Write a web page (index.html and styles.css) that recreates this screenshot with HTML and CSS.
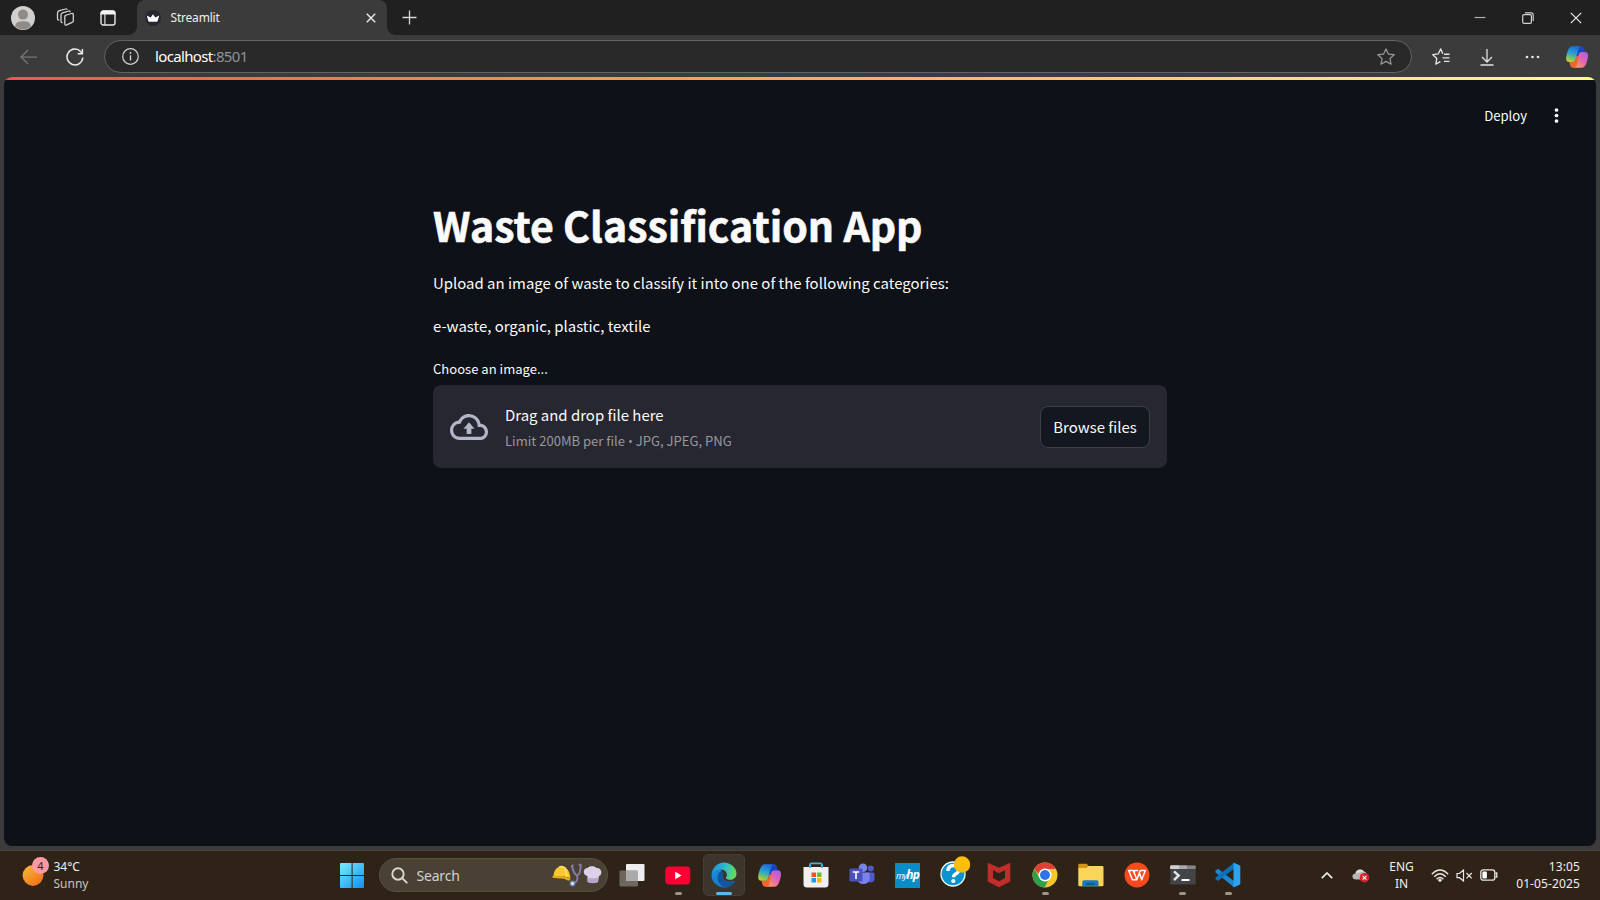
FILE: index.html
```html
<!DOCTYPE html>
<html lang="en">
<head>
<meta charset="utf-8">
<title>Streamlit</title>
<link rel="stylesheet" href="styles.css">
</head>
<body>
<svg class="defs" width="0" height="0" aria-hidden="true">
  <defs>
    <linearGradient id="cpBlue" x1=".3" y1="0" x2="0" y2="1"><stop offset="0" stop-color="#1d74dc"/><stop offset=".4" stop-color="#2ca5cc"/><stop offset=".7" stop-color="#7cc662"/><stop offset="1" stop-color="#f0c51e"/></linearGradient>
    <linearGradient id="cpPink" x1="1" y1="0" x2=".2" y2="1"><stop offset="0" stop-color="#a45cf0"/><stop offset=".45" stop-color="#df62b8"/><stop offset="1" stop-color="#ff9a5c"/></linearGradient>
    <symbol id="copilot" viewBox="0 0 24 24">
      <path d="M8 22.700h9c2.500 0 4-3.200 5-6.500 1.200-3.900 2.300-9.200-2.200-9.200h-3.400c-1.400 0-2.400.8-2.800 2.200l-2.800 10c-.5 1.800-1.200 3.500-2.800 3.500z" fill="url(#cpPink)"/>
      <path d="M14 1.300h1.800c1.700 0 2.700.6 3.200 2.200l1 3.500h-3.600c-1.400 0-2.400.8-2.800 2.200L12.300 13.500 9.500 13.500l2.500-9z" fill="#1747c5"/>
      <path d="M9.500 22.700H8c-1.500 0-2.300-.8-2.800-2.400L4.300 17h3.400c1.400 0 2.400-.8 2.800-2.200l1-3.800h2.700l-2.800 10c-.3 1-1 1.700-1.900 1.700z" fill="#f0662f"/>
      <path d="M15.300 1.300H7.200c-2.500 0-4 3.200-5 6.500C1 11.700-.2 17 4.300 17h3.400c1.400 0 2.400-.8 2.800-2.200l2.800-10c.4-1.600.8-3 2-3.500z" fill="url(#cpBlue)"/>
    </symbol>
  </defs>
</svg>
<div class="browser">
  <header class="titlebar">
    <div class="cell"><svg width="24" height="24" viewBox="0 0 24 24"><circle cx="12" cy="12" r="12" fill="#d2d0ce"/><circle cx="12" cy="8.600" r="5" fill="#918b87"/><path d="M4.200 20.500c0-4 3.400-5.200 7.800-5.200s7.800 1.200 7.800 5.200a12 12 0 0 1-15.600 0z" fill="#918b87"/></svg></div>
    <div class="cell"><svg width="19" height="19" viewBox="0 0 19 19" fill="none" stroke="#d6d6d6" stroke-width="1.250" stroke-linejoin="round" stroke-linecap="round"><path d="M9 7.500l6.500-2q1.800-.4 1.800 1.300v6q0 1.200-1.200 1.600l-5.400 2.500q-1.900.7-1.900-1.200V9q0-1.200 1.200-1.700z"/><path d="M14.200 3.600Q14 2.700 12.700 3L6.500 4.800Q5 5.300 5 6.800v6.500q0 1.400 1.200 1.400"/><path d="M11 1.300Q10.600.6 9.500 1L3.400 2.600Q1.500 3.200 1.500 5v5.700q0 1.300 1.300 1.500"/></svg></div>
    <div class="cell"><svg width="16" height="16" viewBox="0 0 16 16"><rect x="1" y="1" width="14" height="14" rx="2.200" fill="none" stroke="#e8e8e8" stroke-width="1.400"/><path d="M.6 3A2.500 2.500 0 0 1 3 .5h10A2.500 2.500 0 0 1 15.400 3v1.600H.6z" fill="#f4f4f4"/><path d="M4.900 4v11" stroke="#ddd" stroke-width="1.200"/></svg></div>
    <div class="tab">
      <svg width="16" height="16" viewBox="0 0 16 16"><circle cx="8" cy="8" r="8" fill="#262730"/><path d="M1.800 5.500L5.700 7.600 8 4.200l2.300 3.400 3.900-2.100L12.700 11a1 1 0 0 1-1 .7H4.300a1 1 0 0 1-1-.7z" fill="#fff"/></svg>
      <span class="tab-name">Streamlit</span>
      <svg class="tab-close" width="10" height="10" viewBox="0 0 10 10"><path d="M.8.800l8.400 8.400M9.200.800L.8 9.200" stroke="#e6e6e6" stroke-width="1.500"/></svg>
    </div>
    <svg class="plus" width="15" height="15" viewBox="0 0 15 15"><path d="M7.500.500v14M.5 7.500h14" stroke="#d8d8d8" stroke-width="1.300"/></svg>
    <div class="window-buttons">
      <span><svg width="12" height="12" viewBox="0 0 12 12"><path d="M.5 5.500h11" stroke="#aaa" stroke-width="1.200"/></svg></span>
      <span><svg width="12" height="12" viewBox="0 0 12 12" fill="none" stroke="#d0d0d0" stroke-width="1.200"><rect x=".7" y="2.600" width="8.700" height="8.700" rx="1.300"/><path d="M3 .8h6.200q2 0 2 2V9"/></svg></span>
      <span><svg width="12" height="12" viewBox="0 0 12 12"><path d="M.8.800l10.400 10.400M11.200.800L.8 11.200" stroke="#ececec" stroke-width="1.200"/></svg></span>
    </div>
  </header>
  <nav class="toolbar">
    <div class="nav-cell"><svg width="18" height="16" viewBox="0 0 18 16" fill="none" stroke="#777" stroke-width="1.250"><path d="M17 8H1M8 1L1 8l7 7"/></svg></div>
    <div class="nav-cell"><svg width="18" height="18" viewBox="0 0 18 18" fill="none" stroke="#ececec" stroke-width="1.500"><path d="M16.800 9.500A7.900 7.900 0 1 1 14.800 3.700L16.400 5.500"/><path d="M16.400 1v4.700h-4.700"/></svg></div>
    <div class="address">
      <svg width="17" height="17" viewBox="0 0 17 17"><circle cx="8.500" cy="8.500" r="7.800" fill="none" stroke="#d2d2d2" stroke-width="1.200"/><path d="M8.500 7.300v5.200" stroke="#ddd" stroke-width="1.300"/><circle cx="8.500" cy="4.900" r=".9" fill="#ddd"/></svg>
      <span class="url">localhost<i>:8501</i></span>
      <svg class="star" width="18" height="17" viewBox="0 0 18 17" fill="none" stroke="#9a9a9a" stroke-width="1.200" stroke-linejoin="round"><path d="M9 .9l2.400 5.200 5.800.6-4.300 3.900 1.200 5.600L9 13.400l-5.100 2.800 1.200-5.600L.8 6.700l5.800-.6z"/></svg>
    </div>
    <div class="tools">
      <span><svg width="18" height="17" viewBox="0 0 18 17" fill="none" stroke="#e4e4e4" stroke-width="1.350" stroke-linejoin="round"><path d="M10.800 5.800L8.800.9 6.300 5.800.8 6.700l4 3.900-1 5.500 4.500-2.400"/><path d="M12 6.200h5.500M10.500 9.800h7M12 13.300h5.500"/></svg></span>
      <span><svg width="14" height="18" viewBox="0 0 14 18" fill="none" stroke="#e2e2e2" stroke-width="1.300"><path d="M7 1v13M2 9l5 5 5-5M.5 17h13"/></svg></span>
      <span><svg width="15" height="4" viewBox="0 0 15 4" fill="#e6e6e6"><circle cx="2" cy="2" r="1.350"/><circle cx="7.500" cy="2" r="1.350"/><circle cx="13" cy="2" r="1.350"/></svg></span>
      <span><svg width="24" height="24"><use href="#copilot"/></svg></span>
    </div>
  </nav>
  <main class="page">
    <div class="rainbow"></div>
    <div class="app-header"><span class="deploy">Deploy</span><svg width="5" height="15" viewBox="0 0 5 15" fill="#fafafa"><circle cx="2.500" cy="2" r="1.850"/><circle cx="2.500" cy="7.500" r="1.850"/><circle cx="2.500" cy="13" r="1.850"/></svg></div>
    <section class="content">
      <h1>Waste Classification App</h1>
      <p class="intro">Upload an image of waste to classify it into one of the following categories:</p>
      <p class="cats">e-waste, organic, plastic, textile</p>
      <label class="label">Choose an image...</label>
      <div class="dropzone">
        <svg width="38" height="26" viewBox="0 4 24 16" preserveAspectRatio="none" fill="#b3b5cb"><path d="M19.350 10.040A7.490 7.490 0 0 0 12 4C9.110 4 6.600 5.640 5.350 8.040A5.994 5.994 0 0 0 0 14c0 3.310 2.690 6 6 6h13c2.760 0 5-2.240 5-5 0-2.640-2.050-4.780-4.650-4.960zM19 18H6c-2.210 0-4-1.790-4-4s1.790-4 4-4h.71C7.370 7.690 9.480 6 12 6c3.040 0 5.500 2.460 5.500 5.500v.5H19c1.660 0 3 1.340 3 3s-1.340 3-3 3zM8.500 13h2v3.300h3V13h2L12 9z"/></svg>
        <div class="drop-text"><span class="drop-title">Drag and drop file here</span><span class="drop-limit">Limit 200MB per file <i>•</i> JPG, JPEG, PNG</span></div>
        <button class="browse">Browse files</button>
      </div>
    </section>
  </main>
</div>
<footer class="taskbar">
  <div class="weather">
    <div class="sun"><svg width="28" height="28" viewBox="0 0 28 28"><defs><linearGradient id="sun" x1="0" y1="0" x2=".8" y2="1"><stop offset="0" stop-color="#f6bd3a"/><stop offset="1" stop-color="#f26e18"/></linearGradient></defs><circle cx="11" cy="17.500" r="10.400" fill="url(#sun)"/></svg><b>4</b></div>
    <div class="weather-text"><span>34°C</span><span class="dim">Sunny</span></div>
  </div>
  <svg class="start" width="24" height="25" viewBox="0 0 24 25"><defs><linearGradient id="win" gradientUnits="userSpaceOnUse" x1="0" y1="0" x2="24" y2="25"><stop offset="0" stop-color="#79edfb"/><stop offset="1" stop-color="#0c90f3"/></linearGradient></defs><path d="M0 1q0-1 1-1h10.600v12H0zM12.600 0H23q1 0 1 1v11H12.600zM0 13h11.600v12H1q-1 0-1-1zM12.600 13H24v11q0 1-1 1H12.600z" fill="url(#win)"/></svg>
  <div class="search">
    <svg width="17" height="17" viewBox="0 0 17 17" fill="none" stroke="#d8d5d2" stroke-width="1.900" stroke-linecap="round"><circle cx="7" cy="7" r="5.700"/><path d="M11.200 11.200l4.500 4.500"/></svg>
    <span>Search</span>
    <svg class="jobs" width="51" height="24" viewBox="0 0 51 24">
      <path d="M1.500 14C1.500 7.500 5 3.500 9.500 3.500S17.500 7 18.500 15l-6.500-1.500z" fill="#f7c92a"/><path d="M7 4.200Q10.500 2.500 13 5l2 8.500" fill="none" stroke="#ffe476" stroke-width="1.500"/><path d="M.3 13.700q0-.8 1.200-.9l10 .5 6.500 2q1 1.500-.5 2.300-1.500.3-5.500-1.800L1.300 15q-1-.3-1-1.300z" fill="#e3a81d"/>
      <path d="M21.500 2l-1.500 1q1.500 7.500 5 9.500 3.500-1 3.700-10.500l-2-.5M25 12.500q1.800 6-3.500 7.500" fill="none" stroke="#8b7da8" stroke-width="1.900"/><circle cx="20.500" cy="20.500" r="2.300" fill="#cfe6fa" stroke="#667fa8" stroke-width="1.200"/>
      <path d="M35.500 13c-5-.5-5-8 0-8C37 2.500 43 2.500 44.500 5c6-.5 6 7.500 2.500 8l-1 6q-5 2-10.500 0z" fill="#ddd0ea"/><path d="M35.300 14.500l.7 4.800q5 2 9.500 0l.7-4.800q-5 1.700-10.900 0z" fill="#b7a5cc"/>
    </svg>
  </div>
  <div class="apps">
    <span class="app"><svg width="26" height="24" viewBox="0 0 26 24"><rect x="7" y="1" width="18.500" height="17" rx="1" fill="#efefef"/><rect x=".5" y="7.500" width="18.500" height="16" rx="1" fill="#77736f" opacity=".85"/><path d="M7 8h12v10H7z" fill="#aaa"/></svg></span>
    <span class="app run"><svg width="26" height="19" viewBox="0 0 26 19"><rect x=".3" y=".5" width="25" height="18" rx="4" fill="#fc0034"/><path d="M10.200 5.800v7.400l6.500-3.700z" fill="#fff"/></svg></span>
    <span class="app active run"><svg width="26" height="26" viewBox="0 0 26 26"><defs><linearGradient id="eg" x1="0" y1=".3" x2="1" y2=".5"><stop offset="0" stop-color="#1d8fdc"/><stop offset=".5" stop-color="#2cbbd0"/><stop offset="1" stop-color="#67dd55"/></linearGradient><linearGradient id="eb" x1="0" y1="0" x2=".6" y2="1"><stop offset="0" stop-color="#1b8fd6"/><stop offset="1" stop-color="#1476cc"/></linearGradient></defs><path d="M.5 13A12.500 12.500 0 0 0 13 25.500c4.500 0 8.300-2.300 10.500-5.600.4-.7-.2-1.200-.9-.9-3.500 1.600-8.600.8-10.300-2.200L10 7.500C5 6 1 9 .5 13z" fill="url(#eb)"/><path d="M.5 13C1 5.500 6.500.500 13 .500S25.500 5.500 25.500 11.500c0 4-3 6.300-6.500 6.300-3 0-4.700-1.200-4-2.300 2.500-3.500-.5-8-5-8C5 7.500 1 10 .5 13z" fill="url(#eg)"/><path d="M9.800 9.500C6.500 11.500 5.700 15.500 7.200 19c1.300 3.200 4 6 7.300 6.400 4-.3 7-2.500 9-5.500.4-.7-.2-1.200-.9-.9-3.800 1.700-8.200.8-10-1.800-1.400-2-1.400-3.700.2-5.400-.7-1.400-1.800-2-3-2.300z" fill="#1353a0"/></svg></span>
    <span class="app"><svg width="25" height="25"><use href="#copilot"/></svg></span>
    <span class="app"><svg width="26" height="26" viewBox="0 0 26 26"><path d="M7 7V3q0-1.700 1.700-1.700h8.600Q19 1.300 19 3v4" fill="none" stroke="#3eb0e4" stroke-width="1.700"/><path d="M.5 5h25v17q0 3.500-3.500 3.500H4Q.5 25.500.5 22z" fill="#f0f0f0"/><path d="M7 2.500V6M19 2.500V6" stroke="#3eb0e4" stroke-width="1.700"/><path d="M8.500 10.500H13V15H8.500z" fill="#ed512b"/><path d="M14 10.500h4.500V15H14z" fill="#78b82b"/><path d="M8.500 16H13v4.500H8.500z" fill="#1d9adf"/><path d="M14 16h4.500v4.500H14z" fill="#f7b51c"/></svg></span>
    <span class="app"><svg width="26" height="24" viewBox="0 0 26 24"><circle cx="21.800" cy="5.500" r="3" fill="#5059c9"/><path d="M17 9.500h7q1.500 0 1.500 1.500v4.500q0 4-4 4-3 0-4.500-2z" fill="#5059c9"/><circle cx="14" cy="4.800" r="4.300" fill="#7b83eb"/><path d="M8 9.500h11.500q1.200 0 1.200 1.300V16a6.500 6.500 0 0 1-12.700 0z" fill="#7b83eb"/><rect x=".4" y="5.500" width="13" height="13" rx="1.300" fill="#4951bb"/><path d="M3.700 9h6.500M7 9v7" stroke="#fff" stroke-width="1.600"/></svg></span>
    <span class="app"><span class="hp">my<b>hp</b></span></span>
    <span class="app help"><svg width="34" height="32" viewBox="0 0 34 32"><circle cx="17" cy="19" r="12" fill="#0a93cf" stroke="#f4fafc" stroke-width="1.300"/><path d="M12 16q0-5.500 5.500-5.500 5.200 0 5.200 4.200 0 2.500-2.700 4-2.500 1.300-2.500 3.600" fill="none" stroke="#fff" stroke-width="3.400"/><circle cx="17.300" cy="26" r="2.100" fill="#fff"/><circle cx="26" cy="9.500" r="8.200" fill="#fdbd0b"/></svg></span>
    <span class="app"><svg width="24" height="26" viewBox="0 0 24 26"><path d="M.7.700L12 5.700 23.300.700v18.800L12 25.300.700 19.500zM6 8.300V16l6 3.200 6-3.200V8.300l-6 3z" fill="#c12c2d" fill-rule="evenodd"/></svg></span>
    <span class="app run"><svg width="26" height="26" viewBox="0 0 26 26"><circle cx="13" cy="13" r="12.500" fill="#f6c72b"/><path d="M2.200 6.700A12.500 12.500 0 0 1 23.900 7H13a6 6 0 0 0-5.500 6z" fill="#df4036"/><path d="M2.200 6.700l5.700 9.500A6 6 0 0 0 16.300 18.200L12.500 25.500A12.500 12.500 0 0 1 2.200 6.700z" fill="#2f9f4b"/><circle cx="13" cy="13" r="6.500" fill="#fff"/><circle cx="13" cy="13" r="5" fill="#2f74e6"/></svg></span>
    <span class="app"><svg width="26" height="24" viewBox="0 0 26 24"><path d="M.3 2Q.3.700 1.600.700h7L11 3.300H9L7 6H.3z" fill="#d99511"/><path d="M.3 5h7.200L10 3h14.200q1.300 0 1.300 1.300V22q0 1.300-1.300 1.300H1.600Q.3 23.300.3 22z" fill="#fbd558"/><path d="M4.300 23.300V19q0-1.800 1.800-1.800h12.600q1.800 0 1.800 1.800v4.300z" fill="#1777bf"/><path d="M8.200 21h8.400" stroke="#07508d" stroke-width="1.400"/></svg></span>
    <span class="app"><svg width="26" height="26" viewBox="0 0 26 26"><circle cx="13" cy="13" r="12.500" fill="#fa491f"/><path d="M4.700 8.500h4.800l3.300 9.300h-4.400zM9.500 11.500l1.400-3h3.300M12.800 17.800l3.400-9.300M15.400 10.900l2.300 6.900 3.700-9.300h-5.200" fill="none" stroke="#fff" stroke-width="1.500" stroke-linejoin="round"/></svg></span>
    <span class="app run"><svg width="26" height="20" viewBox="0 0 26 20"><rect x=".3" y=".5" width="25.400" height="19" rx="1.200" fill="#434448"/><path d="M.3 4V1.500Q.3.500 1.300.500h23.400q1 0 1 1V4z" fill="#858585"/><path d="M.3 4V1.500q0-1 1-1H17V4z" fill="#aaa"/><path d="M.3 4V1.500q0-1 1-1H9V4z" fill="#d0d0d0"/><path d="M4 6.300l4.700 4.300L4 15" fill="none" stroke="#e6e6e6" stroke-width="2.400"/><path d="M11.500 15h8" stroke="#fff" stroke-width="2"/></svg></span>
    <span class="app run"><svg width="26" height="26" viewBox="0 0 26 26"><path d="M.5 8.800l2.500-1.900L19 19.300v5.900z" fill="#1a87cf"/><path d="M.5 8.800L3 6.900 19 19.300v5.600L.5 10.500z" fill="#1a87cf"/><path d="M.5 17.200L3 19.100 19 6.700V.800L.5 15.500z" fill="#0a70b8"/><path d="M18.500.500l6 2.700q.8.400.8 1.300v17q0 .9-.8 1.300l-6 2.700z" fill="#2ba3f0"/></svg></span>
  </div>
  <div class="tray">
    <svg class="chev" width="12" height="7" viewBox="0 0 12 7" fill="none" stroke="#eceae8" stroke-width="1.700"><path d="M.8 6.200L6 1l5.200 5.200"/></svg>
    <svg class="cloud" width="18" height="15" viewBox="0 0 18 15"><path d="M4.500 11.500C-1 11.500-.5 5.500 3.500 5.500 4 1 10 0 12 3.500c3 .5 3 3 3 8z" fill="#b9b7b4"/><path d="M3.500 5.500C4 1 10 0 12 3.500z" fill="#dedcda"/><circle cx="12.500" cy="9.700" r="4.800" fill="#d2232f"/><path d="M10.600 7.800l3.800 3.800M14.400 7.800l-3.800 3.800" stroke="#fff" stroke-width="1.100"/></svg>
    <div class="lang"><span>ENG</span><span>IN</span></div>
    <svg class="wifi" width="18" height="13" viewBox="0 0 18 13" fill="none" stroke="#eceae8" stroke-width="1.400"><path d="M.8 5.300Q9-3.200 17.200 5.300M3.200 7.800q5.800-6 11.600 0M5.600 10.200q3.400-3.600 6.800 0"/><circle cx="9" cy="11.200" r="1.600" fill="#eceae8" stroke="none"/></svg>
    <svg class="vol" width="17" height="13" viewBox="0 0 17 13" fill="none" stroke="#e8e6e4" stroke-width="1.200"><path d="M1 4.500h2.500L7.500 1v11L3.500 8.700H1zM10.500 4l5.300 5.300M15.800 4l-5.300 5.300"/></svg>
    <svg class="bat" width="18" height="12" viewBox="0 0 18 12"><rect x=".8" y=".8" width="14" height="10.400" rx="2.500" fill="none" stroke="#e8e6e4" stroke-width="1.300"/><rect x="2.400" y="2.400" width="4.500" height="7.200" rx="1" fill="#fff"/><path d="M15.500 4h1.300v4h-1.300" fill="none" stroke="#e8e6e4" stroke-width="1.300"/></svg>
    <div class="clock"><span>13:05</span><span>01-05-2025</span></div>
  </div>
</footer>
</body>
</html>
```
FILE: styles.css
```css
* { box-sizing: border-box; }
body {
  margin: 0;
  width: 1600px;
  height: 900px;
  overflow: hidden;
  background: #3b3b3b;
  font-family: "Noto Sans", "Open Sans", sans-serif;
  color: #f0f0f0;
  display: flex;
  flex-direction: column;
}
.defs { position: absolute; }
svg { display: block; flex: none; }
i { font-style: normal; }
span, p, h1, label, button { white-space: nowrap; }
.browser { height: 851px; display: flex; flex-direction: column; border-bottom: 1px solid #484540; }

.titlebar { height: 35px; background: #202020; display: flex; align-items: center; padding-left: 2px; flex: none; }
.cell { width: 42.500px; display: flex; justify-content: center; }
.tab {
  position: relative;
  width: 250px;
  height: 35px;
  margin-left: 7.500px;
  padding: 0 11.500px 0 7.500px;
  display: flex;
  align-items: center;
  background: #3b3b3b;
  border-radius: 8px 8px 0 0;
}
.tab::before, .tab::after { content: ""; position: absolute; bottom: 0; width: 8px; height: 8px; }
.tab::before { left: -8px; background: radial-gradient(circle at 0 0, #202020 7.500px, #3b3b3b 8px); }
.tab::after { right: -8px; background: radial-gradient(circle at 100% 0, #202020 7.500px, #3b3b3b 8px); }
.tab-name { margin-left: 10px; font-size: 12px; letter-spacing: -.2px; color: #eee; }
.tab-close { margin-left: auto; }
.plus { margin-left: 14.500px; }
.window-buttons { margin-left: auto; display: flex; }
.window-buttons span { width: 48px; display: flex; justify-content: center; }

.toolbar { height: 42px; display: flex; align-items: center; padding: 1px 0 0 6px; flex: none; }
.nav-cell { width: 46px; display: flex; justify-content: center; }
.address {
  width: 1308px;
  height: 33px;
  margin-left: 6px;
  display: flex;
  align-items: center;
  padding: 0 16px 0 17px;
  background: #292929;
  border: 1px solid #646464;
  border-radius: 17px;
}
.url { margin: 0 0 2px 16px; font-size: 15px; letter-spacing: -.65px; color: #fff; }
.url i { color: #929292; }
.star { margin-left: auto; }
.tools { display: flex; margin-left: 7px; }
.tools span { width: 45.300px; display: flex; align-items: center; justify-content: center; }

.page {
  height: 769px;
  margin: 0 4px;
  background: #0e1117;
  border-radius: 8px;
  overflow: hidden;
  font-family: "Noto Sans CJK SC", sans-serif;
  color: #fafafa;
}
.rainbow { height: 3px; background: linear-gradient(90deg, #f85052, #fffd80); }
.app-header { height: 70px; display: flex; align-items: center; justify-content: flex-end; gap: 26.500px; padding-right: 37.500px; }
.deploy { font-size: 13.100px; }
.content { width: 734px; margin: 44px 0 0 429px; display: flex; flex-direction: column; align-items: flex-start; }
h1 { margin: 0; font-size: 41px; line-height: 60px; font-weight: 700; -webkit-text-stroke: .6px #fafafa; }
.intro, .cats { margin: 0; font-size: 14.950px; line-height: 26px; }
.intro { margin-top: 16px; }
.cats { margin-top: 17px; }
.label { margin-top: 19px; font-size: 13.050px; line-height: 22px; }
.dropzone {
  width: 734px;
  height: 83px;
  margin-top: 5px;
  padding: 0 17px;
  display: flex;
  align-items: center;
  background: #262730;
  border-radius: 8px;
}
.drop-text { display: flex; flex-direction: column; margin-left: 17px; padding-top: 2px; }
.drop-title { font-size: 14.950px; line-height: 26px; }
.drop-limit { font-size: 13.050px; line-height: 26px; color: #98989d; }
.drop-limit i { font-family: "Open Sans", sans-serif; }
.browse {
  width: 110px;
  height: 42px;
  margin-left: auto;
  padding: 0 0 1px;
  font: 14.950px "Noto Sans CJK SC", sans-serif;
  color: #fafafa;
  background: #131720;
  border: 1px solid #3d4048;
  border-radius: 8px;
}

.taskbar { height: 49px; display: flex; align-items: center; padding-bottom: 1px; background: #2f2318; }
.weather { width: 340px; display: flex; padding-left: 22px; }
.sun { position: relative; width: 28px; height: 32px; }
.sun b {
  position: absolute;
  left: 10px;
  top: -1.500px;
  width: 17px;
  height: 17px;
  border-radius: 50%;
  background: #ff99a4;
  color: #3a1d20;
  font-size: 11px;
  font-weight: 400;
  line-height: 17px;
  text-align: center;
}
.weather-text { margin-left: 3.500px; display: flex; flex-direction: column; font-size: 12px; line-height: 17px; }
.dim { color: #c8c4c0; }
.search {
  width: 229px;
  height: 34px;
  margin-left: 14.500px;
  padding: 0 4px 0 11px;
  display: flex;
  align-items: center;
  background: #4b4034;
  border: 1px solid #5a4e41;
  border-radius: 17px;
  font-size: 14px;
  letter-spacing: -.2px;
  color: #d5d0ca;
}
.search span { margin-left: 9px; }
.jobs { margin-left: auto; }
.apps { display: flex; margin-left: 2px; }
.app { position: relative; width: 45.850px; height: 42px; display: flex; align-items: center; justify-content: center; }
.app > * { position: relative; z-index: 1; }
.active::before { content: ""; position: absolute; inset: 0 2px; border-radius: 5px; background: #3d342b; border: 1px solid #463d34; }
.run::after { content: ""; position: absolute; bottom: 1px; left: 50%; width: 7px; height: 3px; margin-left: -3.500px; border-radius: 2px; background: #9b958e; }
.active::after { width: 16px; margin-left: -8px; background: #5bb8ee; }
.help { align-items: flex-start; padding-top: 1px; }
.hp { width: 25px; height: 25px; background: #0a8dc6; color: #fff; font: italic 9px/24px "Open Sans", sans-serif; text-align: center; letter-spacing: -.8px; }
.hp b { font-size: 12px; }
.tray { display: flex; align-items: center; margin-left: auto; padding-right: 20px; font-size: 12px; line-height: 17px; }
.cloud { margin-left: 19px; }
.lang { width: 30px; margin-left: 17px; display: flex; flex-direction: column; align-items: center; }
.wifi { margin-left: 14.500px; }
.vol { margin-left: 7px; }
.bat { margin-left: 7px; }
.clock { width: 65px; margin-left: 17px; display: flex; flex-direction: column; align-items: flex-end; letter-spacing: .12px; }
```
